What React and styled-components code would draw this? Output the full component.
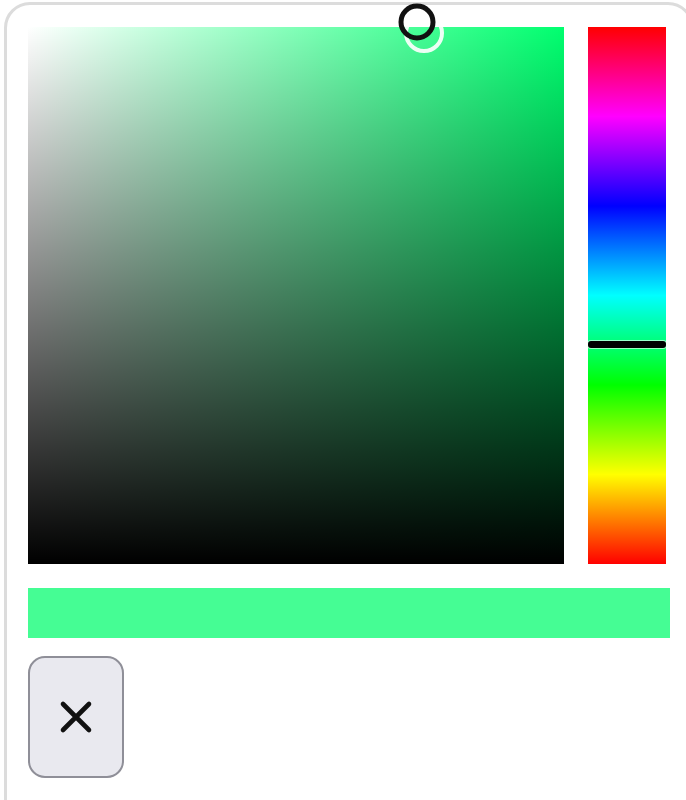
import React from "react";
import styled, { createGlobalStyle } from "styled-components";

const Global = createGlobalStyle`
  html, body {
    margin: 0;
    padding: 0;
    background: #ffffff;
    overflow: hidden;
    font-family: "Liberation Sans", Arial, sans-serif;
  }
`;

const Page = styled.div`
  width: 686px;
  height: 800px;
  overflow: hidden;
  padding: 2px 0 0 4px;
  box-sizing: border-box;
`;

const Panel = styled.div`
  width: 690px;
  height: 830px;
  box-sizing: border-box;
  border: 3px solid #dcdcdc;
  border-radius: 26px;
  background: #ffffff;
  padding: 22px 0 0 21px;
  display: flex;
  flex-direction: column;
`;

const Top = styled.div`
  display: flex;
  gap: 24px;
`;

const Saturation = styled.div`
  position: relative;
  width: 536px;
  height: 537px;
  background: hsl(${(p) => p.hue}, 100%, 50%);
`;

const Layer = styled.div`
  position: absolute;
  inset: 0;
  background: ${(p) => p.fill};
`;

const Pointer = styled.div`
  position: absolute;
  box-sizing: border-box;
  width: ${(p) => p.size}px;
  height: ${(p) => p.size}px;
  border-radius: 50%;
  border: ${(p) => p.stroke}px solid ${(p) => p.color};
  transform: translate(-50%, -50%);
  filter: blur(0.6px);
`;

const Hue = styled.div`
  position: relative;
  width: 78px;
  height: 537px;
  background: linear-gradient(
    to bottom,
    #ff0000 0%,
    #ff00ff 16.67%,
    #0000ff 33.33%,
    #00ffff 50%,
    #00ff00 66.67%,
    #ffff00 83.33%,
    #ff0000 100%
  );
`;

const HueMarker = styled.div`
  position: absolute;
  left: 0;
  right: 0;
  height: 7px;
  border-radius: 3px;
  background: #000000;
  box-shadow: 0 0 0 1px rgba(255, 255, 255, 0.6);
`;

const Swatch = styled.div`
  margin-top: 24px;
  width: 642px;
  height: 50px;
  background: ${(p) => p.color};
`;

const ClearButton = styled.button`
  margin-top: 18px;
  width: 96px;
  height: 122px;
  box-sizing: border-box;
  border: 2px solid #8f8f98;
  border-radius: 17px;
  background: #e9e9ef;
  display: flex;
  align-items: center;
  justify-content: center;
  padding: 0;
  cursor: pointer;
`;

const hue = 146;

export default function App() {
  return (
    <>
      <Global />
      <Page>
        <Panel>
          <Top>
            <Saturation hue={hue}>
              <Layer fill="linear-gradient(to right, #ffffff, rgba(255,255,255,0))" />
              <Layer fill="linear-gradient(to bottom, rgba(0,0,0,0), #000000)" />
              <Pointer size={40} stroke={4} color="rgba(255,255,255,0.9)" style={{ left: 396, top: 6 }} />
              <Pointer size={37} stroke={5} color="#111111" style={{ left: 389, top: -5 }} />
            </Saturation>
            <Hue>
              <HueMarker style={{ top: 314 }} />
            </Hue>
          </Top>
          <Swatch color="#45fd94" />
          <ClearButton aria-label="clear">
            <svg width="36" height="36" viewBox="0 0 36 36">
              <path d="M5 5 L31 31 M31 5 L5 31" stroke="#111" strokeWidth="4.6" strokeLinecap="round" />
            </svg>
          </ClearButton>
        </Panel>
      </Page>
    </>
  );
}
